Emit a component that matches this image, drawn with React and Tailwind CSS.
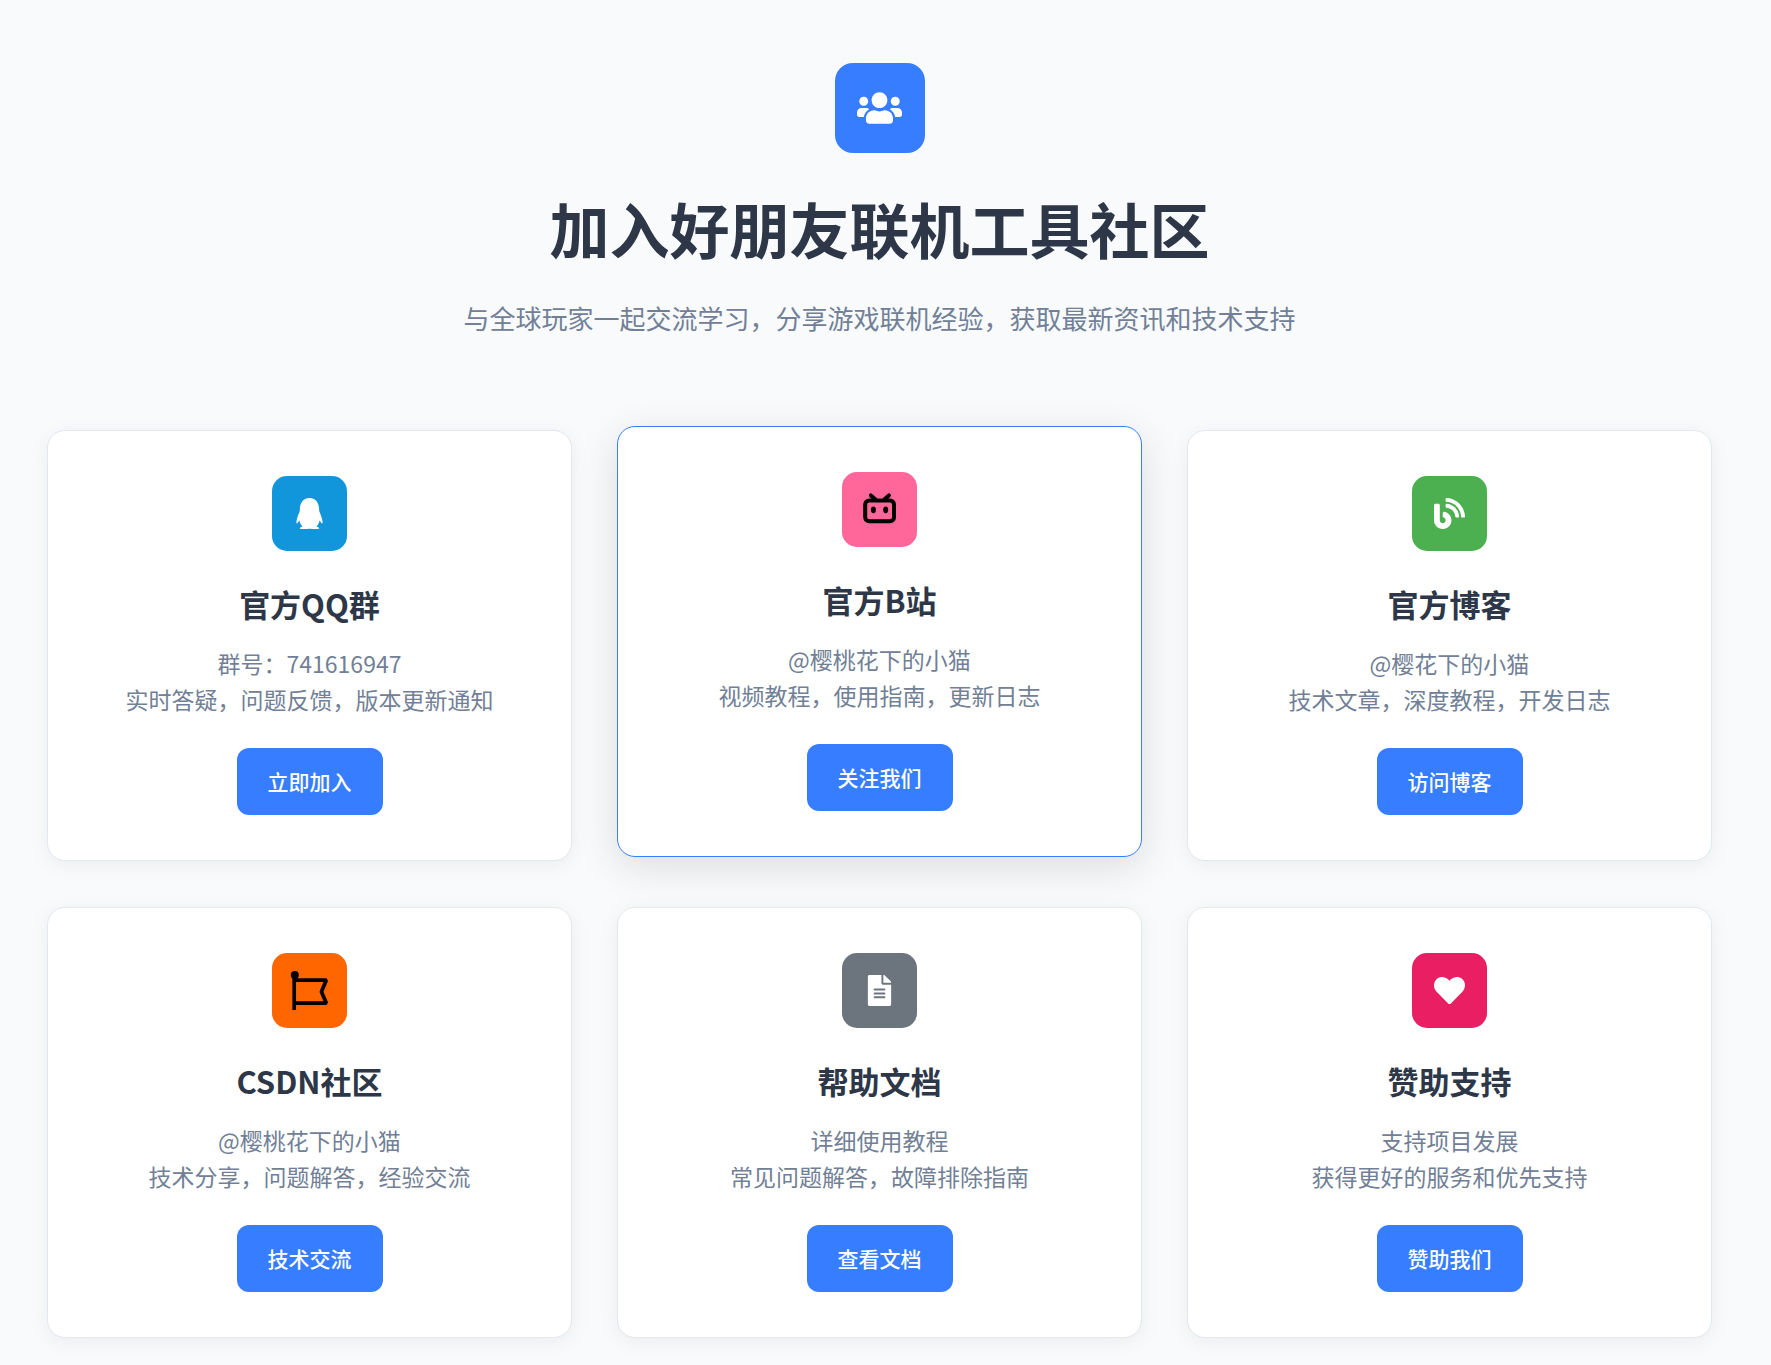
import React from "react";
import { FaUsers, FaQq, FaBlog, FaFileAlt, FaHeart } from "react-icons/fa";

function BilibiliIcon() {
  return (
    <svg
      viewBox="0 0 75 75"
      className="size-full"
      fill="none"
      stroke="#000"
      strokeWidth="4"
      strokeLinecap="round"
      strokeLinejoin="round"
      aria-hidden="true"
    >
      <rect x="23.2" y="28.6" width="28.8" height="20.6" rx="4" />
      <path d="M28.9 23.4 33 27M46.9 23.4 42.8 27" />
      <ellipse cx="31.4" cy="37.8" rx="2.5" ry="3.4" fill="#000" stroke="none" />
      <ellipse cx="43.7" cy="37.8" rx="2.5" ry="3.4" fill="#000" stroke="none" />
    </svg>
  );
}

function FlagIcon() {
  return (
    <svg viewBox="0 0 75 75" className="size-full" fill="none" stroke="#000" strokeWidth="3.7" aria-hidden="true">
      <circle cx="22.8" cy="22" r="4" fill="#000" stroke="none" />
      <path d="M22.2 22V57" />
      <path d="M22.2 27.1H54.4L49.4 38.7 54.4 50.2H22.2" strokeLinejoin="bevel" />
    </svg>
  );
}

const cards = [
  {
    title: "官方QQ群",
    lines: ["群号：741616947", "实时答疑，问题反馈，版本更新通知"],
    action: "立即加入",
    tile: "bg-[#1296db]",
    icon: <FaQq />,
  },
  {
    title: "官方B站",
    lines: ["@樱桃花下的小猫", "视频教程，使用指南，更新日志"],
    action: "关注我们",
    tile: "bg-[#ff6699]",
    icon: <BilibiliIcon />,
    active: true,
  },
  {
    title: "官方博客",
    lines: ["@樱花下的小猫", "技术文章，深度教程，开发日志"],
    action: "访问博客",
    tile: "bg-[#4caf50]",
    icon: <FaBlog />,
  },
  {
    title: "CSDN社区",
    lines: ["@樱桃花下的小猫", "技术分享，问题解答，经验交流"],
    action: "技术交流",
    tile: "bg-[#ff6600]",
    icon: <FlagIcon />,
  },
  {
    title: "帮助文档",
    lines: ["详细使用教程", "常见问题解答，故障排除指南"],
    action: "查看文档",
    tile: "bg-[#6c757d]",
    icon: <FaFileAlt />,
  },
  {
    title: "赞助支持",
    lines: ["支持项目发展", "获得更好的服务和优先支持"],
    action: "赞助我们",
    tile: "bg-[#e91e63]",
    icon: <FaHeart />,
  },
];

function Card({ card }) {
  const look = card.active
    ? "-translate-y-1 border-[#377dff] shadow-[0_10px_40px_rgba(0,0,0,0.12)]"
    : "border-[#e2e8f0] shadow-[0_4px_20px_rgba(0,0,0,0.06)]";
  return (
    <article className={`flex flex-col items-center rounded-[18px] border bg-white p-[45px] text-center ${look}`}>
      <div className={`flex size-[75px] items-center justify-center rounded-[15px] text-[31px] text-white ${card.tile}`}>
        {card.icon}
      </div>
      <h2 className="mt-7 text-[31px] leading-[50px] font-bold text-[#2d3748]">{card.title}</h2>
      <p className="mt-4 text-[23px] leading-[36px] text-[#718096]">
        {card.lines[0]}
        <br />
        {card.lines[1]}
      </p>
      <a
        href="#"
        className="mt-[31px] rounded-xl bg-[#377dff] px-[31px] py-4 text-[21px] leading-[35px] font-medium text-white"
      >
        {card.action}
      </a>
    </article>
  );
}

export default function App() {
  return (
    <main className="min-h-screen bg-[#f8fafc] pt-[63px] pr-[59px] pb-7 pl-[47px] font-['Noto_Sans_CJK_SC',sans-serif]">
      <header className="flex flex-col items-center text-center">
        <div className="flex size-[90px] items-center justify-center rounded-[18px] bg-[#377dff] text-white">
          <FaUsers className="h-[36px] w-[45px]" />
        </div>
        <h1 className="mt-[39px] text-[60px] leading-[72px] font-bold text-[#2d3748]">加入好朋友联机工具社区</h1>
        <p className="mt-[33px] text-[26px] leading-[42px] text-[#718096]">
          与全球玩家一起交流学习，分享游戏联机经验，获取最新资讯和技术支持
        </p>
      </header>
      <section className="mt-[91px] grid grid-cols-3 gap-x-[45px] gap-y-[46px]">
        {cards.map((card) => (
          <Card key={card.title} card={card} />
        ))}
      </section>
    </main>
  );
}
